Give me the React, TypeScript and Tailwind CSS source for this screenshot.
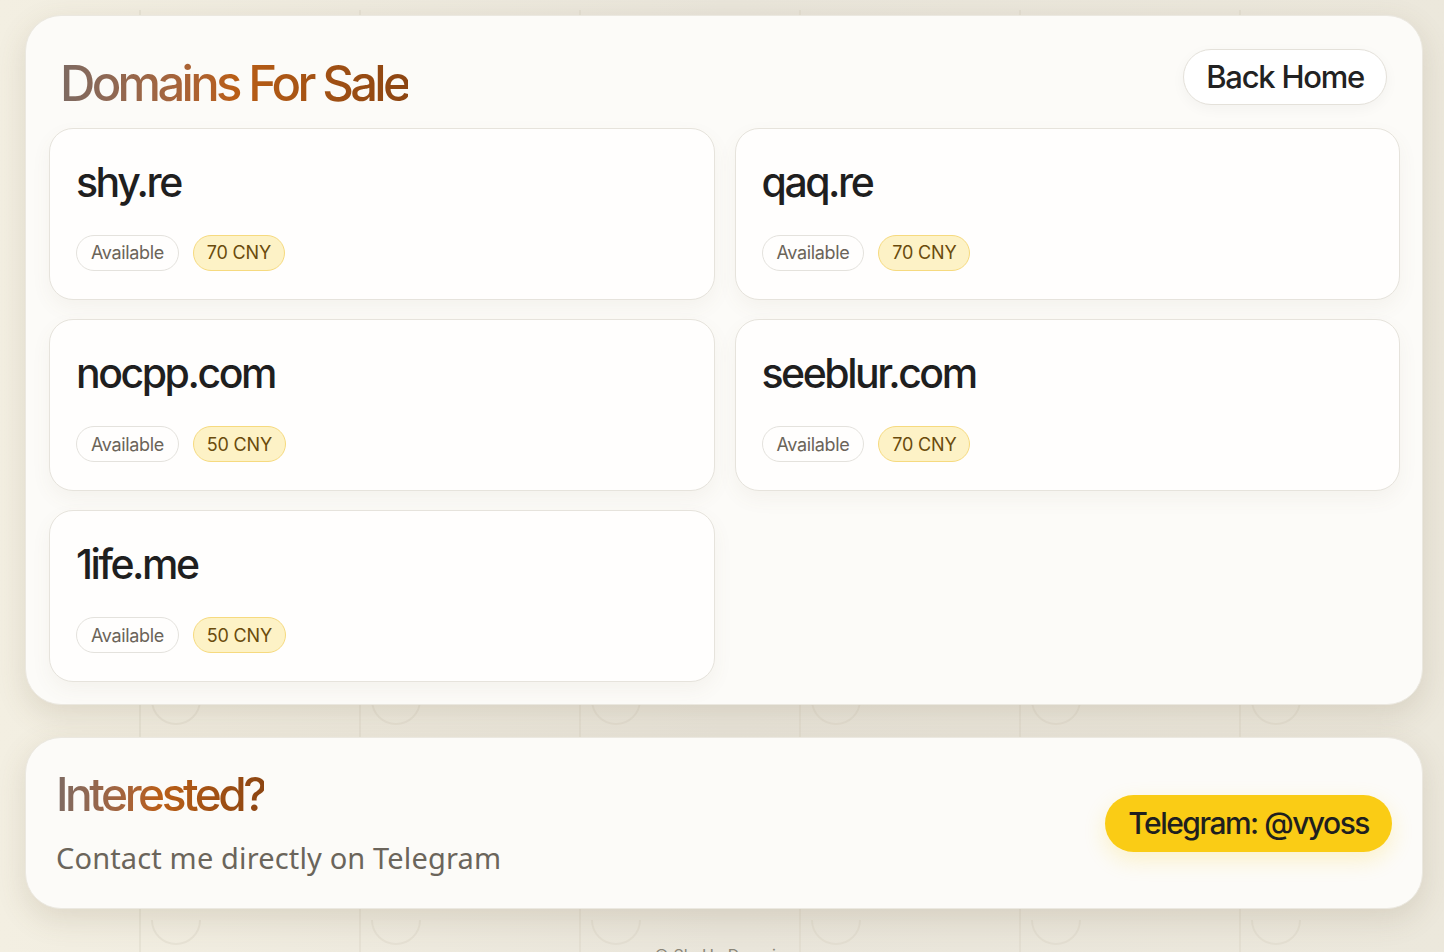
import React from 'react';

// ─── Data ────────────────────────────────────────────────────────────────────

const domains = [
  { name: 'shy.re', price: '70 CNY' },
  { name: 'qaq.re', price: '70 CNY' },
  { name: 'nocpp.com', price: '50 CNY' },
  { name: 'seeblur.com', price: '70 CNY' },
  { name: '1ife.me', price: '50 CNY' },
];

const FONT = { fontFamily: 'Inter, "Noto Sans", "Liberation Sans", sans-serif' };

// ─── Background pattern ──────────────────────────────────────────────────────

function Pattern() {
  return (
    <svg className="absolute inset-0 w-full h-full pointer-events-none" aria-hidden="true">
      <defs>
        <pattern id="bgp" width="220" height="220" patternUnits="userSpaceOnUse">
          <path d="M30 120 a30 30 0 0 1 60 0" fill="none" stroke="#d9d3c4" strokeWidth="2" />
          <path d="M140 10 v70 a14 14 0 0 0 14 14 M200 40 a24 24 0 0 1 -48 0" fill="none" stroke="#d9d3c4" strokeWidth="2" />
        </pattern>
      </defs>
      <rect width="100%" height="100%" fill="url(#bgp)" opacity="0.4" />
    </svg>
  );
}

// ─── Domain card ─────────────────────────────────────────────────────────────

function DomainCard({ name, price }: { name: string; price: string }) {
  return (
    <div className="bg-[#fffefd] rounded-[24px] border border-[#e6e3dc] px-[26px] pt-[29px] pb-[28px] shadow-[0_8px_20px_rgba(120,100,60,0.06)]">
      <h3 className="text-[41px] font-medium text-[#1f1f1f] tracking-[-0.06em] leading-[1.2]">{name}</h3>
      <div className="flex gap-[14px] mt-[28px]">
        <span className="h-[36px] px-[14px] flex items-center rounded-full border border-[#e4e2dd] text-[18px] text-[#6b6459] tracking-[-0.02em]">
          Available
        </span>
        <span className="h-[36px] px-[13px] flex items-center rounded-full border border-[#f6da7f] bg-[#fdf2c6] text-[18px] text-[#6a4b0c] tracking-[-0.01em]">
          {price}
        </span>
      </div>
    </div>
  );
}

// ─── Page ────────────────────────────────────────────────────────────────────

export default function App() {
  return (
    <div
      className="relative h-[952px] bg-gradient-to-r from-[#f3efe2] via-[#e9e5da] to-[#ece8dc] pl-[25px] pr-[21px] pt-[15px] overflow-hidden"
      style={FONT}
    >
      <Pattern />

      <div className="relative flex flex-col gap-[32px]">
        {/* Domains panel */}
        <section className="bg-[#fcfbf8] rounded-[36px] border border-[#ebe8e0] shadow-[0_10px_30px_rgba(110,95,60,0.16)] pb-[22px]">
          <div className="flex items-start justify-between pl-[34px] pr-[35px] pt-[33px] pb-[14px]">
            <h1 className="mt-[6px] text-[49px] font-medium leading-[1.2] tracking-[-0.075em] bg-gradient-to-r from-[#7d6a62] via-[#b95e16] to-[#8c4512] bg-clip-text text-transparent">
              Domains For Sale
            </h1>
            <button className="h-[56px] px-[22px] rounded-full bg-white border border-[#e4e1da] text-[31px] font-medium text-[#222] tracking-[-0.04em] shadow-[0_4px_14px_rgba(0,0,0,0.04)]">
              Back Home
            </button>
          </div>
          <div className="grid grid-cols-2 gap-x-[20px] gap-y-[19px] pl-[23px] pr-[22px]">
            {domains.map((d) => (
              <DomainCard key={d.name} name={d.name} price={d.price} />
            ))}
          </div>
        </section>

        {/* Contact panel */}
        <section className="bg-[#fcfbf8] rounded-[36px] border border-[#ebe8e0] shadow-[0_10px_30px_rgba(110,95,60,0.16)] flex items-center justify-between pl-[30px] pr-[30px] h-[172px]">
          <div>
            <h2 className="text-[46px] font-medium leading-[1.2] tracking-[-0.075em] bg-gradient-to-r from-[#7d6a62] via-[#b95e16] to-[#8c4512] bg-clip-text text-transparent w-fit">
              Interested?
            </h2>
            <p className="mt-[14px] text-[29px] text-[#6b655b] tracking-[0.005em]" style={{ fontFamily: '"Noto Sans", Inter, sans-serif' }}>
              Contact me directly on Telegram
            </p>
          </div>
          <button className="h-[57px] px-[23px] rounded-full bg-[#facc15] text-[30px] font-medium text-[#1f1f1f] tracking-[-0.05em] shadow-[0_8px_22px_rgba(250,204,21,0.2)]">
            Telegram: @vyoss
          </button>
        </section>

        <p className="text-center text-[16px] text-[#8a8578] mt-[2px]">© ShyHu Domains</p>
      </div>
    </div>
  );
}
